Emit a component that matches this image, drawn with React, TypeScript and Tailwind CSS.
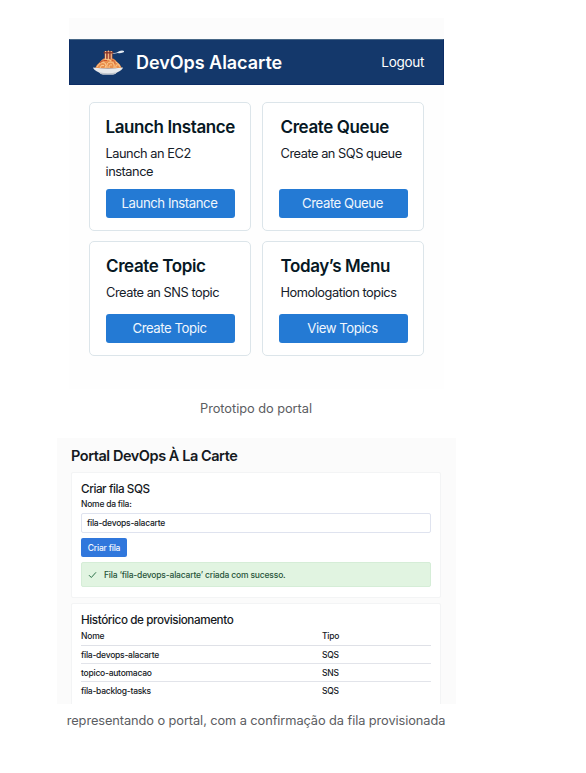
import React from 'react';

function Spaghetti() {
  return (
    <svg width="33" height="26" viewBox="0 0 33 26" className="mt-0.5 ml-[22px] shrink-0">
      <path d="M20 3.3 Q25 3 27 1.200 Q30 0 32 .9 Q32.500 1.900 31 2.400 Q28 3.600 26 3 L20 3.900Z" fill="#e5ebf2" />
      <path d="M3 18.500 Q5 14 8 12 Q12 7 16 8 Q21 7 25 12 Q28 14 30 18.500Z" fill="#e9904d" />
      <path d="M12.500 1 H20.500 V9 H12.500Z" fill="#a9503b" />
      <path d="M13.500 1 V9 M16.400 .5 V9 M19.300 1 V9" stroke="#f5c48e" strokeWidth="1" />
      <path d="M11.500 2.800 H21.500" stroke="#7f3730" strokeWidth="1.300" />
      <g fill="none" stroke="#ffd097" strokeWidth=".9">
        <path d="M5 17 Q8 11 13 13 Q15 15 13 18 M8 18 Q9 14 12 15.500 M10 12 Q15 7 19 11 M15 18 Q14 12 19 12 Q23 13 22 18 M17 18 Q17 14 20 15 M21 12 Q26 11 28 17 M24 18 Q23 14 27 15" />
      </g>
      <path d="M8 12.500 Q12 9.500 15 10.500 M20 10 Q24 12 23 13.500" stroke="#c9532e" strokeWidth="1" fill="none" />
      <path d="M1 17.500 Q16 19.500 31 17.500 Q30.500 20 25 22.500 Q23 24.500 21 24.500 H11 Q9 24.500 7 22.500 Q1.500 20 1 17.500Z" fill="#e8e9eb" />
      <path d="M7 22.300 Q16 24 25 22.300 Q23 24.500 21 24.500 H11 Q9 24.500 7 22.300Z" fill="#bfc4cb" />
    </svg>
  );
}

const services = [
  { title: 'Launch Instance', text: 'Launch an EC2 instance', action: 'Launch Instance', pad: 'pl-0 pr-6' },
  { title: 'Create Queue', text: 'Create an SQS queue', action: 'Create Queue', pad: 'pl-0.5' },
  { title: 'Create Topic', text: 'Create an SNS topic', action: 'Create Topic', pad: 'pl-[0.5px]' },
  { title: 'Today’s Menu', text: 'Homologation topics', action: 'View Topics', pad: 'pl-0.5' },
];

const history = [
  ['fila-devops-alacarte', 'SQS'],
  ['topico-automacao', 'SNS'],
  ['fila-backlog-tasks', 'SQS'],
];

export default function App() {
  return (
    <main className="h-[773px] w-[586px] overflow-hidden bg-white pt-[18px] font-['Inter','Liberation_Sans',sans-serif]">
      <section className="ml-[69px] h-[371px] w-[375px] bg-[#fefefe]">
        <div className="h-[21px] bg-[#fcfcfc]" />
        <header className="flex h-[46px] items-center border border-[#0c2d65] border-t-[#486887] bg-[#14386b] text-white">
          <Spaghetti />
          <h1 className="ml-[11px] pt-[2px] text-[18px] font-semibold leading-6 tracking-[-0.04px] whitespace-nowrap">DevOps Alacarte</h1>
          <a className="mr-[19px] ml-auto text-[13.5px] leading-5 tracking-[-0.3px]">Logout</a>
        </header>
        <div className="ml-5 mt-[17px] grid w-[335px] grid-cols-[162px_162px] grid-rows-[129px_115px] gap-x-[11px] gap-y-[10px]">
          {services.map((s) => (
            <article key={s.title} className="flex flex-col rounded-[5px] border border-[#dce5ea] bg-white px-[15.5px] pt-[12px] pb-[12px]">
              <h2 className={`${s.pad} text-[17px] font-semibold leading-6 tracking-[-0.4px] whitespace-nowrap text-[#071824]`}>{s.title}</h2>
              <p className={`${s.pad} mt-[6px] text-[12.8px] leading-[18px] tracking-[-0.46px] text-[#152029]`}>{s.text}</p>
              <button className="mt-auto h-[29px] w-full shrink-0 rounded-[3px] bg-[#247ad4] pr-px pb-px text-[13.2px] leading-5 tracking-[-0.45px] text-[#f0f6fd]">{s.action}</button>
            </article>
          ))}
        </div>
      </section>
      <p className="mt-[10px] ml-[56.5px] w-[399px] text-center text-[12.8px] leading-5 tracking-[-0.04px] text-[#5b5d62]">Prototipo do portal</p>
      <section className="mt-[19px] ml-[57px] h-[266px] w-[399px] overflow-hidden bg-[#fbfbfb] pl-[14px] text-[#15191e]">
        <h1 className="pt-[6px] pb-px text-[14.5px] font-semibold leading-[24px] tracking-[-0.45px] whitespace-nowrap">Portal DevOps À La Carte</h1>
        <div className="mt-[3px] h-[126px] w-[370px] rounded-[2px] border border-[#f3f4f5] bg-white pr-[9px] pl-[9px] pt-[7px]">
          <h2 className="text-[11.7px] font-medium leading-[18px] tracking-[-0.43px]">Criar fila SQS</h2>
          <label className="block text-[8.5px] font-medium leading-[13px] tracking-[-0.24px]">Nome da fila:</label>
          <div className="mt-[2px] h-[20px] rounded-[2px] border border-[#dfe3ef] pl-[5px] text-[8.5px] font-medium leading-[18px] tracking-[-0.24px]">fila-devops-alacarte</div>
          <button className="mt-[5px] flex h-[19px] w-[46px] items-center justify-center rounded-[2px] bg-[#3077dc] pt-px text-[8.5px] font-medium tracking-[-0.22px] whitespace-nowrap text-[#f3f8ff]">Criar fila</button>
          <div className="mt-[5px] flex h-[25px] items-center rounded-[2px] border border-[#d5edd7] bg-[#e1f4e1] pt-px text-[8.5px] font-medium tracking-[-0.18px] text-[#28543b]">
            <svg width="9" height="8" viewBox="0 0 9 8" className="ml-[6px] mr-[7px]"><path d="M1 4.200 L3.300 6.500 L8 1.300" fill="none" stroke="#2b7049" /></svg>
            <span>Fila ‘fila-devops-alacarte’ criada com sucesso.</span>
          </div>
        </div>
        <div className="mt-[5px] h-[110px] w-[370px] rounded-t-[2px] border border-[#f3f4f5] bg-white pr-[9px] pl-[9px] pt-[7px]">
          <h2 className="-mb-px text-[11.7px] font-medium leading-[19px] tracking-[-0.41px]">Histórico de provisionamento</h2>
          <div className="grid h-[17px] grid-cols-[241px_1fr] border-b border-[#dfe1e7] text-[8.5px] font-medium leading-[14px] tracking-[-0.2px]"><span>Nome</span><span>Tipo</span></div>
          {history.map(([name, type]) => (
            <div key={name} className="grid h-[18px] grid-cols-[241px_1fr] border-b border-[#e2e4ea] text-[8.5px] font-medium leading-[18px] tracking-[-0.24px] last:border-0"><span>{name}</span><span>{type}</span></div>
          ))}
        </div>
      </section>
      <p className="mt-[7px] ml-[56.5px] w-[399px] text-center text-[12.8px] leading-5 tracking-[-0.08px] whitespace-nowrap text-[#5b5d62]">representando o portal, com a confirmação da fila provisionada</p>
    </main>
  );
}
